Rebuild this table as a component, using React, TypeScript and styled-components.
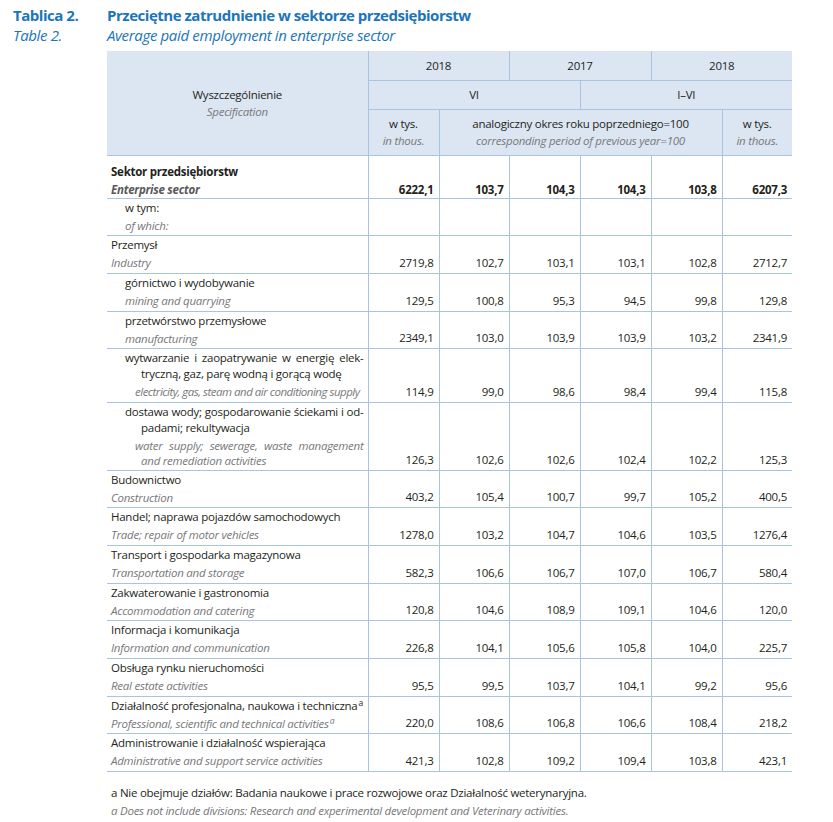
import React from "react";
import styled, { createGlobalStyle } from "styled-components";

const GlobalStyle = createGlobalStyle`
  html, body { margin: 0; padding: 0; background: #ffffff; }
  body { font-family: "Open Sans", "Noto Sans", sans-serif; color: #231f20; }
`;

const BLUE = "#1b75bb";
const LINE = "#a9c3e3";
const HEAD_BG = "#dce6f2";
const GREY = "#77787b";

const Page = styled.div`
  display: grid;
  grid-template-columns: 94px 685px;
  padding: 5px 0 0 13px;
  letter-spacing: -0.25px;
`;

const TitleLabel = styled.div<{ $en?: boolean }>`
  font-size: 15px;
  line-height: 20px;
  color: ${BLUE};
  font-weight: ${(p) => (p.$en ? 400 : 700)};
  font-style: ${(p) => (p.$en ? "italic" : "normal")};
  letter-spacing: ${(p) => (p.$en ? "-0.35px" : "-0.47px")};
  white-space: nowrap;
`;

const TableArea = styled.div`
  grid-column: 2;
  margin-top: 6px;
`;

const Table = styled.table`
  border-collapse: collapse;
  table-layout: fixed;
  width: 685px;
  font-size: 11.5px;
`;

const HeadRow = styled.tr<{ $h: number }>`
  height: ${(p) => p.$h}px;
`;

const HeadCell = styled.th<{ $last?: boolean }>`
  background: ${HEAD_BG};
  font-weight: 400;
  text-align: center;
  vertical-align: middle;
  padding: 0 4px;
  line-height: 17px;
  border-bottom: 1px solid ${LINE};
  border-right: ${(p) => (p.$last ? "none" : `1px solid ${LINE}`)};
  color: #231f20;
  white-space: nowrap;
`;

const EnText = styled.div`
  color: ${GREY};
  font-style: italic;
`;

const BodyRow = styled.tr``;

const SpecCell = styled.td<{ $bold?: boolean }>`
  vertical-align: top;
  padding: ${(p) => (p.$bold ? "8px 4px 0 4px" : "1px 4px 1.7px 4px")};
  border-bottom: 1px solid ${LINE};
  border-right: 1px solid ${LINE};
  font-weight: ${(p) => (p.$bold ? 700 : 400)};
`;

const PlBlock = styled.div<{ $indent: number }>`
  padding-left: ${(p) => p.$indent}px;
  line-height: 16px;
`;

const EnBlock = styled.div<{ $indent: number; $bold?: boolean; $tight?: boolean }>`
  padding-left: ${(p) => p.$indent}px;
  margin-top: 2px;
  line-height: ${(p) => (p.$tight ? 15 : 16)}px;
  color: ${(p) => (p.$bold ? "#58595b" : GREY)};
  font-style: italic;
`;

const Line = styled.div<{ $justify?: boolean; $shift?: number; $squeeze?: number }>`
  padding-left: ${(p) => p.$shift ?? 0}px;
  text-align: ${(p) => (p.$justify ? "justify" : "left")};
  text-align-last: ${(p) => (p.$justify ? "justify" : "left")};
  white-space: nowrap;
  ${(p) => (p.$squeeze ? `letter-spacing: ${p.$squeeze}px;` : "")}
`;

const NumCell = styled.td<{ $bold?: boolean; $last?: boolean }>`
  vertical-align: bottom;
  text-align: right;
  padding: 0 5px ${(p) => (p.$bold ? 0 : 2)}px 0;
  line-height: 16px;
  font-weight: ${(p) => (p.$bold ? 700 : 400)};
  border-bottom: 1px solid ${LINE};
  border-right: ${(p) => (p.$last ? "none" : `1px solid ${LINE}`)};
`;

const Sup = styled.sup`
  font-size: 8.5px;
  line-height: 0;
  vertical-align: 4px;
  margin-left: 1px;
`;

const Footnote = styled.div`
  grid-column: 2;
  margin-top: 12px;
  padding-left: 4px;
  font-size: 11.5px;
  line-height: 18px;
  white-space: nowrap;
`;

const FootnoteEn = styled.div`
  color: ${GREY};
  font-style: italic;
`;

type LineSpec = { text: React.ReactNode; justify?: boolean; shift?: number; squeeze?: number };

type Row = {
  pl: LineSpec[];
  en: LineSpec[];
  sub?: boolean;
  bold?: boolean;
  tight?: boolean;
  vals: string[] | null;
};

const L = (text: React.ReactNode, justify = false, shift = 0, squeeze = 0): LineSpec => ({
  text,
  justify,
  shift,
  squeeze,
});

const rows: Row[] = [
  { pl: [L("Sektor przedsiębiorstw")], en: [L("Enterprise sector")], bold: true, vals: ["6222,1", "103,7", "104,3", "104,3", "103,8", "6207,3"] },
  { pl: [L("w tym:")], en: [L("of which:")], sub: true, vals: null },
  { pl: [L("Przemysł")], en: [L("Industry")], vals: ["2719,8", "102,7", "103,1", "103,1", "102,8", "2712,7"] },
  { pl: [L("górnictwo i wydobywanie")], en: [L("mining and quarrying")], sub: true, vals: ["129,5", "100,8", "95,3", "94,5", "99,8", "129,8"] },
  { pl: [L("przetwórstwo przemysłowe")], en: [L("manufacturing")], sub: true, vals: ["2349,1", "103,0", "103,9", "103,9", "103,2", "2341,9"] },
  {
    pl: [L("wytwarzanie i zaopatrywanie w energię elek-", true), L("tryczną, gaz, parę wodną i gorącą wodę", false, 16)],
    en: [L("electricity, gas, steam and air conditioning supply", false, 10, -0.5)],
    sub: true,
    vals: ["114,9", "99,0", "98,6", "98,4", "99,4", "115,8"],
  },
  {
    pl: [L("dostawa wody; gospodarowanie ściekami i od-", true), L("padami; rekultywacja", false, 16)],
    en: [L("water supply; sewerage, waste management", true, 10), L("and remediation activities", false, 16)],
    sub: true,
    tight: true,
    vals: ["126,3", "102,6", "102,6", "102,4", "102,2", "125,3"],
  },
  { pl: [L("Budownictwo")], en: [L("Construction")], vals: ["403,2", "105,4", "100,7", "99,7", "105,2", "400,5"] },
  { pl: [L("Handel; naprawa pojazdów samochodowych")], en: [L("Trade; repair of motor vehicles")], vals: ["1278,0", "103,2", "104,7", "104,6", "103,5", "1276,4"] },
  { pl: [L("Transport i gospodarka magazynowa")], en: [L("Transportation and storage")], vals: ["582,3", "106,6", "106,7", "107,0", "106,7", "580,4"] },
  { pl: [L("Zakwaterowanie i gastronomia")], en: [L("Accommodation and catering")], vals: ["120,8", "104,6", "108,9", "109,1", "104,6", "120,0"] },
  { pl: [L("Informacja i komunikacja")], en: [L("Information and communication")], vals: ["226,8", "104,1", "105,6", "105,8", "104,0", "225,7"] },
  { pl: [L("Obsługa rynku nieruchomości")], en: [L("Real estate activities")], vals: ["95,5", "99,5", "103,7", "104,1", "99,2", "95,6"] },
  {
    pl: [L(<>Działalność profesjonalna, naukowa i techniczna<Sup>a</Sup></>)],
    en: [L(<>Professional, scientific and technical activities<Sup>a</Sup></>)],
    vals: ["220,0", "108,6", "106,8", "106,6", "108,4", "218,2"],
  },
  { pl: [L("Administrowanie i działalność wspierająca")], en: [L("Administrative and support service activities")], vals: ["421,3", "102,8", "109,2", "109,4", "103,8", "423,1"] },
];

const colWidths = [261, 71, 70, 71, 71, 71, 70];

export default function App() {
  return (
    <>
      <GlobalStyle />
      <Page>
        <TitleLabel>Tablica 2.</TitleLabel>
        <TitleLabel>Przeciętne zatrudnienie w sektorze przedsiębiorstw</TitleLabel>
        <TitleLabel $en>Table 2.</TitleLabel>
        <TitleLabel $en>Average paid employment in enterprise sector</TitleLabel>
        <TableArea>
          <Table>
            <colgroup>
              {colWidths.map((w, i) => (
                <col key={i} style={{ width: w }} />
              ))}
            </colgroup>
            <thead>
              <HeadRow $h={29}>
                <HeadCell rowSpan={3}>
                  <div>Wyszczególnienie</div>
                  <EnText>Specification</EnText>
                </HeadCell>
                <HeadCell colSpan={2}>2018</HeadCell>
                <HeadCell colSpan={2}>2017</HeadCell>
                <HeadCell colSpan={2} $last>2018</HeadCell>
              </HeadRow>
              <HeadRow $h={29}>
                <HeadCell colSpan={3}>VI</HeadCell>
                <HeadCell colSpan={3} $last>I–VI</HeadCell>
              </HeadRow>
              <HeadRow $h={46}>
                <HeadCell>
                  <div>w tys.</div>
                  <EnText>in thous.</EnText>
                </HeadCell>
                <HeadCell colSpan={4}>
                  <div>analogiczny okres roku poprzedniego=100</div>
                  <EnText>corresponding period of previous year=100</EnText>
                </HeadCell>
                <HeadCell $last>
                  <div>w tys.</div>
                  <EnText>in thous.</EnText>
                </HeadCell>
              </HeadRow>
            </thead>
            <tbody>
              {rows.map((r, i) => (
                <BodyRow key={i}>
                  <SpecCell $bold={r.bold}>
                    <PlBlock $indent={r.sub ? 14 : 0}>
                      {r.pl.map((l, j) => (
                        <Line key={j} $justify={l.justify} $shift={l.shift}>
                          {l.text}
                        </Line>
                      ))}
                    </PlBlock>
                    <EnBlock $indent={r.sub ? 14 : 0} $bold={r.bold} $tight={r.tight}>
                      {r.en.map((l, j) => (
                        <Line key={j} $justify={l.justify} $shift={l.shift} $squeeze={l.squeeze}>
                          {l.text}
                        </Line>
                      ))}
                    </EnBlock>
                  </SpecCell>
                  {(r.vals ?? ["", "", "", "", "", ""]).map((v, j) => (
                    <NumCell key={j} $bold={r.bold} $last={j === 5}>
                      {v}
                    </NumCell>
                  ))}
                </BodyRow>
              ))}
            </tbody>
          </Table>
        </TableArea>
        <Footnote>
          <div>a Nie obejmuje działów: Badania naukowe i prace rozwojowe oraz Działalność weterynaryjna.</div>
          <FootnoteEn>a Does not include divisions: Research and experimental development and Veterinary activities.</FootnoteEn>
        </Footnote>
      </Page>
    </>
  );
}
